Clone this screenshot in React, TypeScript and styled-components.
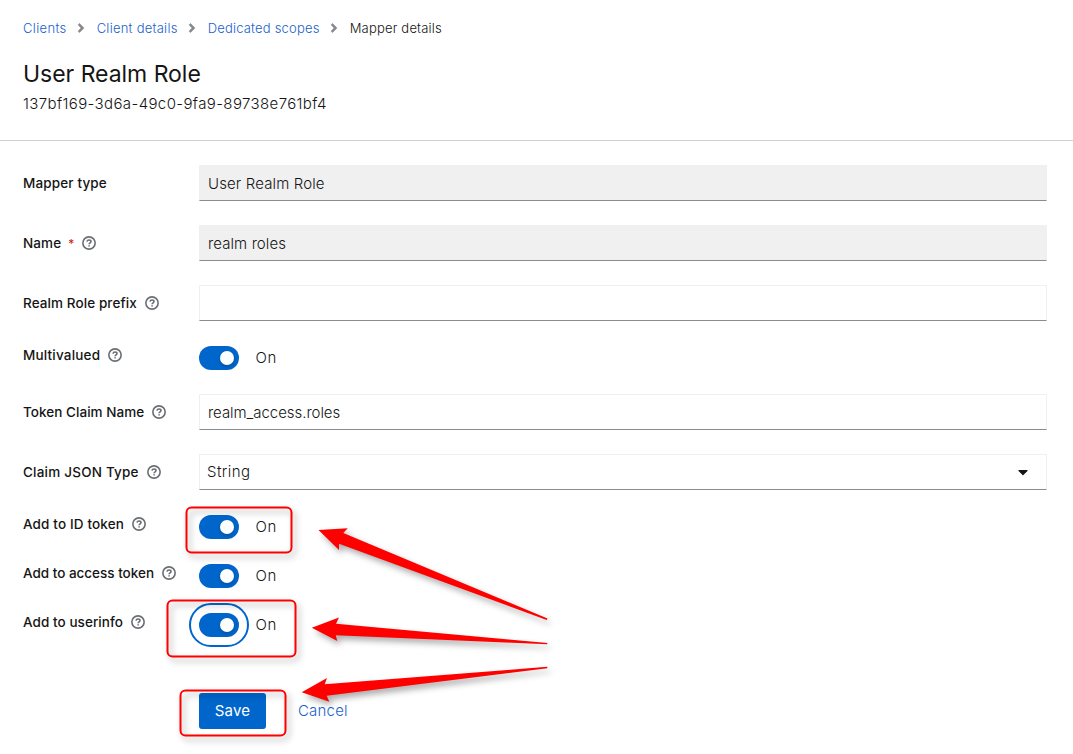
import React from 'react';
import styled, { createGlobalStyle } from 'styled-components';
import { FaAngleRight, FaCaretDown } from 'react-icons/fa';

const GlobalStyle = createGlobalStyle`
  *, *::before, *::after { box-sizing: border-box; }
  body {
    margin: 0;
    background: #fff;
    color: #151515;
    font-family: Inter, "Open Sans", sans-serif;
    font-size: 15px;
    font-weight: 300;
  }
`;

const Page = styled.main`
  position: relative;
  width: 1073px;
  height: 754px;
  overflow: hidden;
`;

const Header = styled.header`
  height: 141px;
  padding: 18px 23px 0;
  border-bottom: 1px solid #d2d2d2;
`;

const Breadcrumb = styled.nav`
  display: flex;
  align-items: center;
  height: 20px;
  font-size: 13px;
`;

const Crumb = styled.span<{ $track: number; $current?: boolean }>`
  color: ${p => (p.$current ? '#151515' : '#1b5fcc')};
  letter-spacing: ${p => p.$track}px;
  white-space: nowrap;
`;

const Separator = styled(FaAngleRight)`
  width: 14px;
  height: 14px;
  margin: 0 9px 0 7px;
  color: #85888c;
  stroke: #85888c;
  stroke-width: 16px;
`;

const Title = styled.h1`
  margin: 21px 0 0;
  font-size: 23px;
  font-weight: 400;
  line-height: 31px;
  letter-spacing: -0.03px;
`;

const Subtitle = styled.p`
  margin: 2px 0 0;
  line-height: 24px;
  letter-spacing: 0.38px;
`;

const Form = styled.form`
  display: flex;
  flex-direction: column;
  gap: 24px;
  padding: 24px 26px 0 23px;
`;

const Row = styled.div<{ $compact?: boolean }>`
  display: grid;
  grid-template-columns: 176px 1fr;
  height: ${p => (p.$compact ? 25 : 36)}px;
`;

const Label = styled.label<{ $track: number; $compact?: boolean }>`
  display: flex;
  align-items: center;
  height: ${p => (p.$compact ? 20 : 36)}px;
  font-size: 13.5px;
  font-weight: 500;
  letter-spacing: ${p => p.$track}px;
  white-space: nowrap;
`;

const Required = styled.span`
  margin-left: 7px;
  color: #c9190b;
  font-size: 12px;
  font-weight: 400;
`;

const HelpGlyph = styled.svg`
  width: 14px;
  height: 14px;
  margin-left: 8px;
  fill: none;
  stroke: #6a6e73;
  stroke-width: 1.6;
`;

const Field = styled.div<{ $track?: number; $disabled?: boolean; $select?: boolean }>`
  display: flex;
  align-items: center;
  justify-content: space-between;
  height: 36px;
  padding: 0 ${p => (p.$select ? 15 : 8)}px ${p => (p.$select ? 1 : 0)}px ${p => (p.$select ? 7 : 8)}px;
  border: 1px solid #f0f0f0;
  border-bottom-color: #8a8d90;
  background: ${p => (p.$disabled ? '#f0f0f0' : '#fff')};
  letter-spacing: ${p => p.$track ?? 0}px;
`;

const Caret = styled(FaCaretDown)`
  width: 16px;
  height: 16px;
`;

const SwitchLine = styled.div`
  display: flex;
  align-items: center;
  gap: 16px;
  height: 24px;
  margin-top: 1px;
`;

const SwitchText = styled.span`
  padding: 0 0 2px 0.5px;
  letter-spacing: 0.7px;
`;

const Toggle = styled.span<{ $focused?: boolean }>`
  display: flex;
  align-items: center;
  justify-content: flex-end;
  width: 40px;
  height: 24px;
  padding-right: 4.8px;
  border-radius: 12px;
  background: #06c;
  outline: ${p => (p.$focused ? '2px solid #06c' : 'none')};
  outline-offset: 8px;
`;

const Knob = styled.span`
  width: 14.4px;
  height: 14.4px;
  border-radius: 50%;
  background: #fff;
  box-shadow: 0 2px 4px rgba(3, 3, 3, 0.2);
`;

const Actions = styled.div`
  display: flex;
  gap: 32px;
  margin: 32px 0 0 176px;
`;

const SaveButton = styled.button`
  width: 67px;
  height: 36px;
  padding: 0 0 2px;
  border: 0;
  border-radius: 3px;
  background: #06c;
  color: #fff;
  font: 400 15px Inter, sans-serif;
  letter-spacing: 0.2px;
`;

const CancelButton = styled.button`
  padding: 0 0 2px;
  border: 0;
  background: none;
  color: #1b5fcc;
  font: 300 15px Inter, sans-serif;
  letter-spacing: 0.2px;
`;

const Annotations = styled.svg`
  position: absolute;
  inset: 0;
  pointer-events: none;

  g { filter: drop-shadow(3px 4px 3px rgba(0, 0, 0, 0.33)); }
  rect { fill: none; stroke: #f00; stroke-width: 2; }
  path { fill: #f00; }
`;

function Help() {
  return (
    <HelpGlyph viewBox="0 0 14 14">
      <circle cx="7" cy="7" r="6.15" />
      <path d="M5 5.6C5.2 4.5 6 4 7 4c1.200 0 2 .7 2 1.600C9 6.900 7.100 6.800 7.100 8.200M7.100 9.200V10.600" />
    </HelpGlyph>
  );
}

type FieldRowProps = {
  label: string;
  labelTrack: number;
  value?: string;
  track?: number;
  required?: boolean;
  help?: boolean;
  disabled?: boolean;
  select?: boolean;
};

function FieldRow({ label, labelTrack, value, track, required, help = true, disabled, select }: FieldRowProps) {
  return (
    <Row>
      <Label $track={labelTrack}>
        {label}
        {required && <Required>*</Required>}
        {help && <Help />}
      </Label>
      <Field $track={track} $disabled={disabled} $select={select}>
        <span>{value}</span>
        {select && <Caret />}
      </Field>
    </Row>
  );
}

function SwitchRow({ label, labelTrack, focused }: { label: string; labelTrack: number; focused?: boolean }) {
  return (
    <Row $compact>
      <Label $track={labelTrack} $compact>
        {label}
        <Help />
      </Label>
      <SwitchLine>
        <Toggle $focused={focused}><Knob /></Toggle>
        <SwitchText>On</SwitchText>
      </SwitchLine>
    </Row>
  );
}

export default function App() {
  return (
    <Page>
      <GlobalStyle />
      <Header>
        <Breadcrumb>
          <Crumb $track={0.35}>Clients</Crumb>
          <Separator />
          <Crumb $track={0.25}>Client details</Crumb>
          <Separator />
          <Crumb $track={0.2}>Dedicated scopes</Crumb>
          <Separator />
          <Crumb $track={0.19} $current>Mapper details</Crumb>
        </Breadcrumb>
        <Title>User Realm Role</Title>
        <Subtitle>137bf169-3d6a-49c0-9fa9-89738e761bf4</Subtitle>
      </Header>
      <Form>
        <FieldRow label="Mapper type" labelTrack={0.14} value="User Realm Role" track={0.13} help={false} disabled />
        <FieldRow label="Name" labelTrack={0.1} value="realm roles" track={0.1} required disabled />
        <FieldRow label="Realm Role prefix" labelTrack={0.09} />
        <SwitchRow label="Multivalued" labelTrack={0.18} />
        <FieldRow label="Token Claim Name" labelTrack={0.04} value="realm_access.roles" track={-0.04} />
        <FieldRow label="Claim JSON Type" labelTrack={0.21} value="String" track={0.45} select />
        <SwitchRow label="Add to ID token" labelTrack={0.14} />
        <SwitchRow label="Add to access token" labelTrack={-0.01} />
        <SwitchRow label="Add to userinfo" labelTrack={0.06} focused />
        <Actions>
          <SaveButton type="button">Save</SaveButton>
          <CancelButton type="button">Cancel</CancelButton>
        </Actions>
      </Form>
      <Annotations width="1073" height="754" viewBox="0 0 1073 754">
        <g>
          <rect x="186.5" y="507.5" width="105" height="45" rx="5" />
          <rect x="167.5" y="600.5" width="128" height="56" rx="5" />
          <rect x="180.5" y="690.5" width="105" height="45" rx="5" />
        </g>
        <g>
          <path d="M318.500 530 347.7 528.3 343.3 533 547.5 618.5 546.7 620 339 543.7V550Z" />
          <path d="M311.8 627.7 339 617.6 336 623.7 547.3 643V644.3L335.7 635.2 337.3 641Z" />
          <path d="M301.7 692.3 327 678 324.7 684.3 547.3 666.8V668.3L326.7 695.7 329.3 701.7Z" />
        </g>
      </Annotations>
    </Page>
  );
}
